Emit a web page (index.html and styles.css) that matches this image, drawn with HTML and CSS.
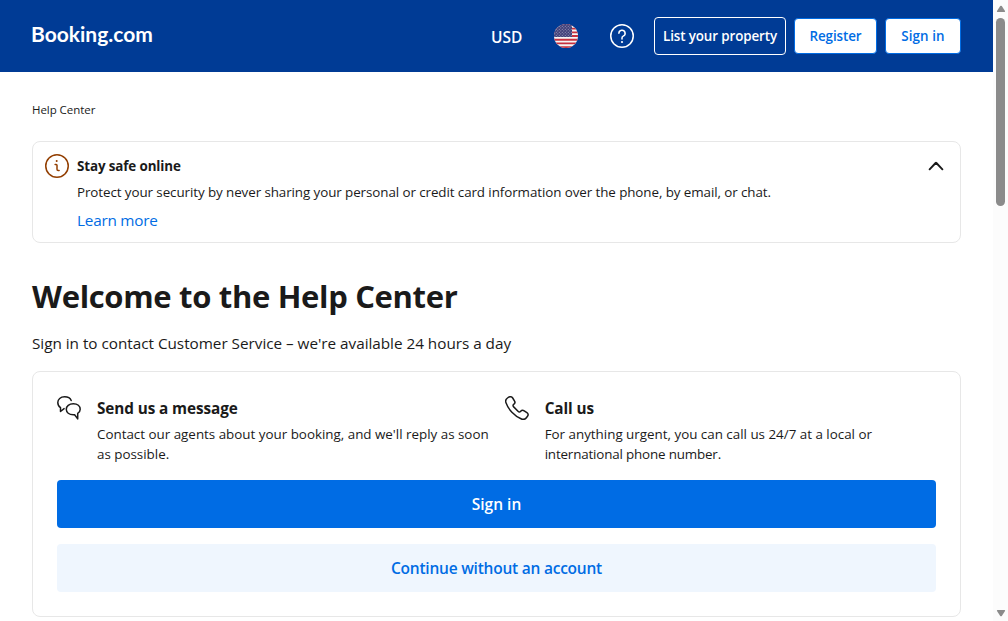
FILE: index.html
```html
<!DOCTYPE html>
<html lang="en">
<head>
<meta charset="utf-8">
<title>Help Center</title>
<link rel="stylesheet" href="styles.css">
</head>
<body>
<div class="page">
  <header class="header">
    <a class="logo">Booking.com</a>
    <nav class="nav">
      <span class="currency">USD</span>
      <svg class="flag" viewBox="0 0 24 24">
        <defs>
          <clipPath id="round"><circle cx="12" cy="12" r="12"/></clipPath>
          <pattern id="stars" width="3" height="3" patternUnits="userSpaceOnUse"><circle cx=".8" cy=".8" r=".6"/><circle cx="2.3" cy="2.3" r=".6"/></pattern>
        </defs>
        <g clip-path="url(#round)">
          <path fill="#f5f5f5" d="M0 0h24v24H0z"/>
          <path stroke="#c7303f" stroke-width="1.85" d="M0 .9h24M0 4.6h24M0 8.3h24M0 12h24M0 15.7h24M0 19.4h24M0 23.1h24"/>
          <path fill="#41407a" d="M0 0h18v13H0z"/>
          <path fill="url(#stars)" class="stars" d="M0 0h18v13H0z"/>
        </g>
      </svg>
      <svg class="help" viewBox="0 0 24 24"><circle cx="12" cy="12" r="11.25"/><path d="M8.9 9.3a3.1 3.1 0 1 1 4.3 2.85c-.8.4-1.2.95-1.2 1.75v1.1"/><circle class="dot" cx="12" cy="18" r="1.1"/></svg>
      <a class="btn-list">List your property</a>
      <a class="btn-white btn-register">Register</a>
      <a class="btn-white btn-signin">Sign in</a>
    </nav>
  </header>
  <main class="main">
    <div class="crumb">Help Center</div>
    <section class="card notice">
      <svg class="info" viewBox="0 0 24 24"><circle cx="12" cy="12" r="11.25"/><path d="M10.1 10.5h1.1c.5 0 .8.3.8.8v3.9c0 .8.5 1.3 1.2 1.3h.9"/><circle class="dot" cx="11.7" cy="7.1" r="1"/></svg>
      <div class="notice-body">
        <h2 class="notice-title">Stay safe online</h2>
        <p class="notice-text">Protect your security by never sharing your personal or credit card information over the phone, by email, or chat.</p>
        <a class="learn">Learn more</a>
      </div>
      <svg class="chevron" viewBox="0 0 24 24"><path d="M5.6 15.3 11.6 9q.4-.4.8 0l6 6.3"/></svg>
    </section>
    <h1 class="title">Welcome to the Help Center</h1>
    <p class="subtitle">Sign in to contact Customer Service – we're available 24 hours a day</p>
    <section class="card contact">
      <div class="options">
        <div class="option">
          <svg class="icon" viewBox="0 0 24 24"><path d="M14.2 4.5C13.2 2 11 .8 7.6.8 3.5.8.8 3.3.8 6.5c0 2.200 1 4 2.700 5.100v3.900l3.600-2.900"/><path d="M16.300 7.800c-4.200 0-7 2.300-7 5.500s2.800 5.500 7 5.500c.5 0 .9 0 1.300-.1l3.100 4.200v-5.500c1.600-1 2.500-2.400 2.500-4.100 0-3.200-2.700-5.500-6.900-5.500z"/></svg>
          <div>
            <h3 class="option-title">Send us a message</h3>
            <p class="option-text">Contact our agents about your booking, and we'll reply as soon<br>as possible.</p>
          </div>
        </div>
        <div class="option">
          <svg class="icon" viewBox="0 0 24 24"><path d="M9.700 5.300 7.700 2C6.800.6 5.100.3 3.700 1.200L2.500 2C.9 3.100.3 5 1 6.800c1.300 3.600 3.300 6.800 5.900 9.500 2.700 2.900 5.900 5.200 9.600 6.700 1.800.7 3.700.2 4.900-1.300l1.100-1.400c1-1.300.8-2.800-.6-3.700l-2.700-1.800c-1.300-.8-2.500-.7-3.500.4-.9 1-1.700 1-2.700 0L8.700 10.900c-.9-1-.9-1.800 0-2.500 1.200-.8 1.600-1.900 1-3.100z"/></svg>
          <div>
            <h3 class="option-title">Call us</h3>
            <p class="option-text">For anything urgent, you can call us 24/7 at a local or<br><span class="tight">international phone number.</span></p>
          </div>
        </div>
      </div>
      <a class="wide primary">Sign in</a>
      <a class="wide secondary">Continue without an account</a>
    </section>
  </main>
</div>
<div class="scrollbar">
  <svg class="arrow" viewBox="0 0 10 8"><path d="M4.200 1.100q.8-.9 1.600 0L9 6q.5 1-.6 1H1.600Q.5 7 1 6z"/></svg>
  <div class="thumb"></div>
  <svg class="arrow down" viewBox="0 0 10 8"><path d="M4.200 1.100q.8-.9 1.600 0L9 6q.5 1-.6 1H1.600Q.5 7 1 6z"/></svg>
</div>
</body>
</html>
```
FILE: styles.css
```css
* { box-sizing: border-box; }
html, body { margin: 0; height: 621px; overflow: hidden; }
body {
  display: flex;
  font-family: "Open Sans", "Noto Sans", sans-serif;
  color: #1a1a1a;
  background: #fff;
  white-space: nowrap;
}
h1, h2, h3, p { margin: 0; }
svg { display: block; flex: none; fill: none; }
.page { width: 993px; }
.header {
  height: 72px;
  background: #003b95;
  padding: 0 32px;
  display: flex;
  align-items: center;
  justify-content: space-between;
  color: #fff;
}
.logo {
  font: 700 21px/28px Lato, sans-serif;
  margin-left: -1px;
  padding-bottom: 5px;
}
.nav { display: flex; align-items: center; }
.currency { width: 31px; margin-right: 32px; font-size: 15.5px; font-weight: 600; line-height: 24px; padding-top: 1px; }
.flag { width: 24px; height: 24px; margin-right: 32px; }
.stars { opacity: .45; }
#stars circle { fill: #fff; }
.help { width: 24px; height: 24px; margin-right: 20px; stroke: #fff; stroke-width: 1.5; stroke-linecap: round; }
.help .dot { fill: #fff; stroke: none; }
.btn-list, .btn-white {
  display: flex;
  align-items: center;
  justify-content: center;
  font-size: 13.4px;
  font-weight: 600;
  letter-spacing: -.11px;
  border-radius: 4px;
}
.btn-list { width: 132px; height: 38px; border: 1px solid #fff; margin-right: 8px; }
.btn-white { height: 36px; background: #fff; color: #006ce4; border: 1px solid #006ce4; }
.btn-register { width: 83px; margin-right: 8px; }
.btn-signin { width: 76px; letter-spacing: .1px; }
.main { padding: 28px 32px 0; }
.crumb { font-size: 11.5px; line-height: 20px; height: 41px; letter-spacing: -.05px; }
.card { border: 1px solid #e7e7e7; border-radius: 8px; }
.notice { height: 102px; padding: 12px; display: flex; }
.info { width: 24px; height: 24px; margin-right: 8px; stroke: #923e01; stroke-width: 1.5; stroke-linecap: round; }
.info .dot { fill: #923e01; stroke: none; }
.notice-body { flex: 1; }
.notice-title { font-size: 13.4px; line-height: 20px; padding-top: 2px; font-weight: 700; letter-spacing: -.12px; }
.notice-text { font-size: 13.4px; line-height: 20px; margin-top: 4px; padding-top: 2px; letter-spacing: -.086px; }
.learn { display: block; font-size: 15.3px; line-height: 24px; margin-top: 6px; color: #006ce4; letter-spacing: -.22px; }
.chevron { width: 24px; height: 24px; stroke: #1a1a1a; stroke-width: 1.9; stroke-linecap: round; }
.title { font-size: 31px; line-height: 40px; font-weight: 700; margin-top: 33px; letter-spacing: -.33px; }
.subtitle { font-size: 15.3px; line-height: 24px; margin-top: 15px; margin-bottom: 16px; letter-spacing: -.025px; }
.contact { height: 246px; padding: 24px; }
.options { display: grid; grid-template-columns: 1fr 1fr; column-gap: 16px; height: 84px; }
.option { display: flex; gap: 16px; }
.icon { width: 24px; height: 24px; stroke: #1a1a1a; stroke-width: 1.5; stroke-linecap: round; stroke-linejoin: round; }
.option-title { font-size: 15.3px; line-height: 24px; font-weight: 700; letter-spacing: -.09px; }
.option-text { font-size: 13.4px; line-height: 20px; margin-top: 4px; letter-spacing: -.01px; }
.tight { letter-spacing: -.17px; }
.wide {
  display: flex;
  align-items: center;
  justify-content: center;
  height: 48px;
  border-radius: 4px;
  font-size: 15.5px;
  font-weight: 600;
}
.primary { background: #006ce4; color: #fff; }
.secondary { background: #eff6fe; color: #006ce4; margin-top: 16px; letter-spacing: -.23px; }
.scrollbar {
  width: 15px;
  background: #fcfcfc;
  display: flex;
  flex-direction: column;
  align-items: center;
  padding: 5px 0 4px;
}
.arrow { width: 10px; height: 8px; fill: #8b8b8b; }
.down { margin-top: auto; transform: rotate(180deg); }
.thumb { width: 9px; height: 188px; margin-top: 5px; border-radius: 5px; background: #8b8b8b; }
```
